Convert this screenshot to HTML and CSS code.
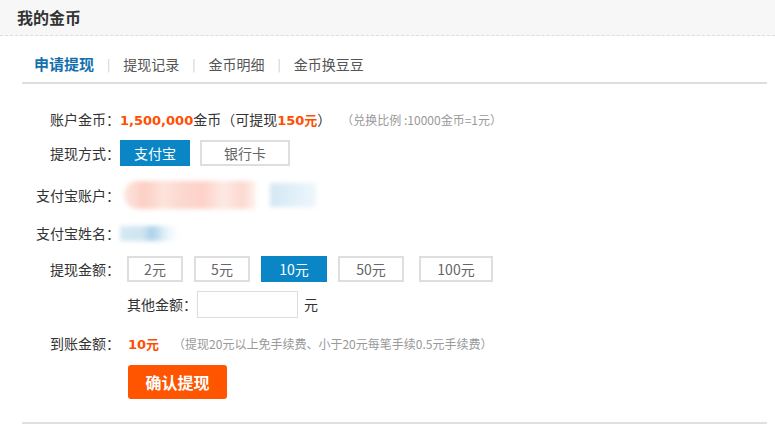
FILE: index.html
```html
<!DOCTYPE html>
<html lang="zh-CN">

<head>
    <meta charset="UTF-8">
    <title>我的金币</title>
    <link rel="stylesheet" href="styles.css">
</head>

<body>
    <!-- 顶部标题 -->
    <div class="page-head">我的金币</div>

    <div class="main">
        <!-- 标签页 -->
        <div class="tabs">
            <a class="tab active" href="#">申请提现</a>
            <span class="tab-sep">|</span>
            <a class="tab" href="#">提现记录</a>
            <span class="tab-sep">|</span>
            <a class="tab" href="#">金币明细</a>
            <span class="tab-sep">|</span>
            <a class="tab" href="#">金币换豆豆</a>
        </div>

        <!-- 提现表单 -->
        <div class="form">
            <div class="row row-first">
                <span class="label">账户金币：</span>
                <span class="value"><b class="hot">1,500,000</b>金币（可提现<b class="hot">150元</b>）</span>
                <span class="tip tip-rate">（兑换比例 :10000金币=1元）</span>
            </div>

            <div class="row">
                <span class="label">提现方式：</span>
                <div class="choices">
                    <a class="choice choice-pay selected" href="#">支付宝</a>
                    <a class="choice choice-bank" href="#">银行卡</a>
                </div>
            </div>

            <div class="row row-account">
                <span class="label">支付宝账户：</span>
                <span class="mosaic mosaic-account"></span>
                <span class="mosaic mosaic-account-tail"></span>
            </div>

            <div class="row">
                <span class="label">支付宝姓名：</span>
                <span class="mosaic mosaic-name"></span>
            </div>

            <div class="row row-amount">
                <span class="label">提现金额：</span>
                <div class="choices amounts">
                    <a class="choice amount" href="#">2元</a>
                    <a class="choice amount" href="#">5元</a>
                    <a class="choice amount wide selected" href="#">10元</a>
                    <a class="choice amount wide" href="#">50元</a>
                    <a class="choice amount wider" href="#">100元</a>
                </div>
            </div>

            <div class="row row-other">
                <span class="other-label">其他金额：</span>
                <input class="other-input" type="text">
                <span class="unit">元</span>
            </div>

            <div class="row row-result">
                <span class="label">到账金额：</span>
                <b class="hot result">10元</b>
                <span class="tip tip-fee">（提现20元以上免手续费、小于20元每笔手续0.5元手续费）</span>
            </div>

            <div class="submit-row">
                <a class="submit" href="#">确认提现</a>
            </div>
        </div>
    </div>
</body>

</html>
```

FILE: styles.css
```css
/* 基础样式 */
body {
    margin: 0;
    background: #fff;
    font-family: "Noto Sans CJK SC", "Liberation Sans", sans-serif;
    font-size: 14px;
    color: #333;
}

a {
    text-decoration: none;
}

/* 顶部标题栏 */
.page-head {
    height: 35px;
    line-height: 35px;
    padding-left: 17px;
    background: #f7f7f7;
    border-bottom: 1px dashed #dcdcdc;
    font-size: 16px;
    font-weight: bold;
    color: #333;
}

.main {
    margin: 0 8px 0 22px;
    border-bottom: 2px solid #e0e0e0;
}

/* 标签页 */
.tabs {
    display: flex;
    align-items: center;
    padding: 18px 0 8px 12px;
    line-height: 20px;
    border-bottom: 2px solid #dddddd;
}

.tab {
    color: #555;
    font-size: 14px;
}

.tab.active {
    color: #1470ad;
    font-weight: bold;
    font-size: 15px;
}

.tab-sep {
    color: #c8c8c8;
    font-size: 12px;
    margin: 0 13px;
}

/* 表单 */
.form {
    padding: 22px 0 23px;
    margin-left: -22px;
}

.row {
    display: flex;
    align-items: center;
    height: 26px;
    margin-bottom: 10px;
}

.row-first {
    margin-bottom: 8px;
}

.row-account {
    height: 30px;
    margin-top: 14px;
}

.row-amount {
    margin-bottom: 9px;
}

.row-result {
    margin-top: 13px;
    margin-bottom: 9px;
}

.label {
    width: 120px;
    text-align: right;
    flex-shrink: 0;
}

.hot {
    color: #ff4e00;
    font-weight: bold;
    font-family: "DejaVu Sans", "Noto Sans CJK SC", sans-serif;
    font-size: 13px;
}

.value {
    white-space: nowrap;
}

.tip {
    font-size: 12px;
    color: #999;
    margin-left: 14px;
    white-space: nowrap;
}

.tip-rate {
    margin-left: 10px;
}

/* 选择按钮 */
.choices {
    display: flex;
    gap: 10px;
}

.choice {
    box-sizing: border-box;
    height: 26px;
    line-height: 22px;
    border: 2px solid #dedede;
    text-align: center;
    color: #666;
    background: #fff;
}

.choice.selected {
    background: #0a86c6;
    border-color: #0a86c6;
    color: #fff;
}

.choice-pay {
    width: 70px;
}

.choice-bank {
    width: 90px;
}

.amounts {
    margin-left: 7px;
    gap: 11px;
}

.amount {
    width: 56px;
}

.amount.wide {
    width: 66px;
}

.amount.wider {
    width: 74px;
    margin-left: 4px;
}

/* 打码区域 */
.mosaic {
    display: inline-block;
    filter: blur(2px);
}

.mosaic-account {
    width: 132px;
    height: 28px;
    margin-left: 4px;
    border-radius: 14px 0 0 14px;
    background: linear-gradient(90deg, #fde6e0 0%, #fccfc4 15%, #fde3dc 30%, #fcd7ce 45%, #fdd2c8 60%, #fde9e4 75%, #fcd9d0 90%, #fff2ef 100%);
}

.mosaic-account-tail {
    width: 46px;
    height: 24px;
    margin-left: 14px;
    background: linear-gradient(90deg, #d3e7f3 0%, #e1eff8 50%, #eef6fb 100%);
}

.mosaic-name {
    width: 58px;
    height: 15px;
    background: linear-gradient(90deg, #d6e9f4 0%, #cfe3f1 40%, #a9d1e8 55%, #e8f3fa 80%, #fff 100%);
}

/* 其他金额 */
.other-label {
    margin-left: 127px;
}

.other-input {
    box-sizing: border-box;
    width: 101px;
    height: 27px;
    margin-left: 0;
    border: 1px solid #dddddd;
    outline: none;
}

.unit {
    margin-left: 6px;
}

.result {
    margin-left: 8px;
}

/* 提交按钮 */
.submit-row {
    padding-left: 128px;
}

.submit {
    display: inline-block;
    width: 99px;
    height: 34px;
    line-height: 34px;
    text-align: center;
    background: #ff5500;
    color: #fff;
    font-size: 16px;
    font-weight: bold;
    border-radius: 3px;
}
```
